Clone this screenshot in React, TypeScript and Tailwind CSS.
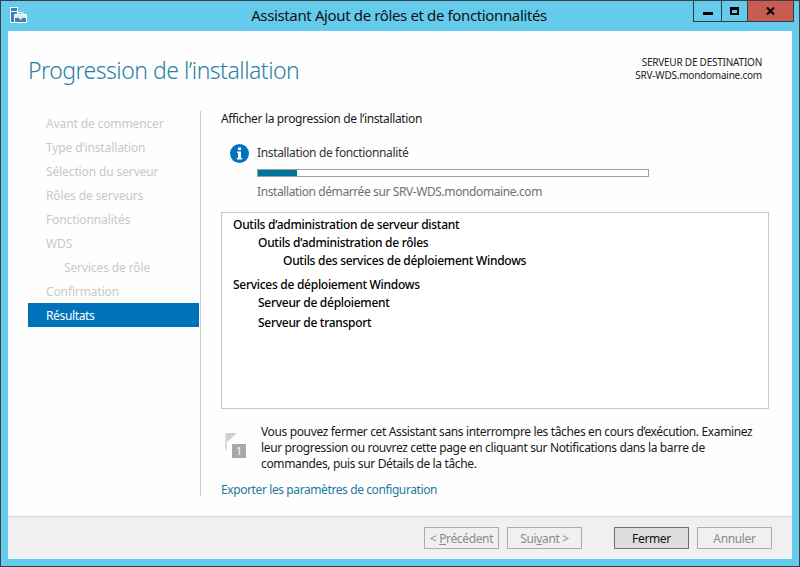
import React from "react";

const steps = [
  { t: "Avant de commencer" },
  { t: "Type d’installation" },
  { t: "Sélection du serveur" },
  { t: "Rôles de serveurs" },
  { t: "Fonctionnalités" },
  { t: "WDS" },
  { t: "Services de rôle", sub: true },
  { t: "Confirmation" },
];

function AppIcon() {
  return (
    <svg width="17" height="16" viewBox="0 0 17 16" className="block">
      <rect x="0.5" y="0.5" width="7" height="15" fill="#2f86b8" stroke="#fff" />
      <rect x="1" y="4" width="6" height="1" fill="#fff" />
      <path d="M7 7.5H16.5V15.5H4.5V7.5H7" fill="#4b7f9a" stroke="#fff" />
      <path d="M8 7V5.5H13V7" fill="none" stroke="#fff" />
      <rect x="5" y="8" width="11" height="3" fill="#dbe9f0" />
      <rect x="9.5" y="10.5" width="2" height="2" fill="#fff" />
    </svg>
  );
}

function InfoIcon() {
  return (
    <svg width="19" height="19" viewBox="0 0 19 19" className="block">
      <circle cx="9.5" cy="9.5" r="9.5" fill="#0072bc" />
      <rect x="8" y="3.5" width="3" height="2.6" fill="#fff" />
      <path d="M7 7.5H11V14H12.2V15.5H6.8V14H8V9H7Z" fill="#fff" />
    </svg>
  );
}

function FlagIcon() {
  return (
    <div className="relative w-[21px] h-[25px]">
      <svg width="21" height="25" viewBox="0 0 21 25" className="block">
        <rect x="0" y="0" width="2" height="17" fill="#dcdcdc" />
        <path d="M2 0H12L2 9Z" fill="#cfcfcf" />
      </svg>
      <div className="absolute right-0 bottom-0 w-[14px] h-[14px] bg-[#a8a8a8] text-white text-[10px] leading-[14px] text-center tracking-normal">1</div>
    </div>
  );
}

function Btn({ label, u, after, primary }: { label?: string; u?: string; after?: string; primary?: boolean }) {
  return (
    <div
      className={
        "w-[75px] h-[22px] border flex items-center justify-center text-[12px] pt-[3px] " +
        (primary ? "border-[#707070] bg-[#dddddd] text-[#111111]" : "border-[#adadad] bg-[#f0f0f0] text-[#8a8a8a]")
      }
    >
      <span>
        {label}
        {u && <span className="underline">{u}</span>}
        {after}
      </span>
    </div>
  );
}

export default function App() {
  return (
    <div className="w-[800px] h-[567px] bg-[#65cbec] border border-[#3a3f45] flex flex-col overflow-hidden text-[12px] font-['Noto_Sans',sans-serif] tracking-[-0.35px] text-[#1a1a1a]">
      <div className="h-[30px] shrink-0 relative">
        <div className="absolute left-[9px] top-[6px]"><AppIcon /></div>
        <div className="text-center text-[15px] leading-[29px] text-[#111111] tracking-[-0.37px] pr-[2px]">Assistant Ajout de rôles et de fonctionnalités</div>
        <div className="absolute right-[5px] top-0 h-[21px] flex border border-t-0 border-[#2f3b45]">
          <div className="w-[28px] border-r border-[#2f3b45] flex items-center justify-center">
            <div className="w-[10px] h-[3px] bg-black mt-[4px]" />
          </div>
          <div className="w-[26px] border-r border-[#2f3b45] flex items-center justify-center">
            <div className="w-[9px] h-[8px] border-2 border-t-[3px] border-black" />
          </div>
          <div className="w-[45px] bg-[#c75c50] flex items-center justify-center">
            <svg width="9" height="8" viewBox="0 0 9 8"><path d="M1 0.5L8 7.5M8 0.5L1 7.5" stroke="#000" strokeWidth="2" /></svg>
          </div>
        </div>
      </div>

      <div className="flex-1 mx-[7px] mb-[7px] bg-[#fefefe] flex flex-col min-h-0">
        <div className="h-[80px] shrink-0 flex justify-between pl-[20px] pr-[30px]">
          <div className="text-[23px] leading-[32px] mt-[23px] text-[#2a7ea8] font-light tracking-[-0.5px]">Progression de l’installation</div>
          <div className="text-right text-[10px] leading-[13px] mt-[25px] text-[#222222] tracking-[-0.23px]">
            <div>SERVEUR DE DESTINATION</div>
            <div>SRV-WDS.mondomaine.com</div>
          </div>
        </div>

        <div className="flex h-[385px] shrink-0 pl-[20px]">
          <div className="w-[172px] shrink-0 pt-[1px] tracking-[-0.12px]">
            {steps.map((s) => (
              <div key={s.t} className={"h-[24px] leading-[24px] text-[#c8c8c8] " + (s.sub ? "pl-[36px]" : "pl-[18px]")}>{s.t}</div>
            ))}
            <div className="h-[24px] w-[171px] mt-[-1px] leading-[26px] pl-[18px] bg-[#0072bc] text-white tracking-[-0.35px]">Résultats</div>
          </div>
          <div className="w-[1px] bg-[#c8c8c8] shrink-0" />
          <div className="w-[548px] ml-[20px]">
            <div className="leading-[16px] text-[#1a1a1a]">Afficher la progression de l’installation</div>
            <div className="flex mt-[17px] ml-[9px]">
              <div className="w-[27px] shrink-0"><InfoIcon /></div>
              <div className="flex-1">
                <div className="leading-[16px] mt-[1px] text-[#333333]">Installation de fonctionnalité</div>
                <div className="w-[392px] h-[8px] mt-[8px] border border-[#a0a0a0] bg-white">
                  <div className="w-[39px] h-full bg-[#007599]" />
                </div>
                <div className="leading-[16px] mt-[7px] text-[#707070] tracking-[-0.4px]">Installation démarrée sur SRV-WDS.mondomaine.com</div>
              </div>
            </div>
            <div className="h-[197px] mt-[12px] border border-[#c8c8c8] bg-white pl-[11px] pt-[3px] text-black font-medium tracking-[-0.28px]">
              <div className="leading-[18px]">Outils d’administration de serveur distant</div>
              <div className="leading-[18px] pl-[25px]">Outils d’administration de rôles</div>
              <div className="leading-[18px] pl-[50px]">Outils des services de déploiement Windows</div>
              <div className="leading-[18px] mt-[6px]">Services de déploiement Windows</div>
              <div className="leading-[18px] pl-[25px]">Serveur de déploiement</div>
              <div className="leading-[18px] pl-[25px] mt-[2px]">Serveur de transport</div>
            </div>
            <div className="flex mt-[15px] pl-[4px] w-[540px]">
              <div className="w-[36px] shrink-0 pt-[9px]"><FlagIcon /></div>
              <div className="leading-[16px] text-[#1a1a1a] tracking-[-0.36px]">
                Vous pouvez fermer cet Assistant sans interrompre les tâches en cours d’exécution. Examinez leur progression ou rouvrez cette page en cliquant sur Notifications dans la barre de commandes, puis sur Détails de la tâche.
              </div>
            </div>
            <div className="mt-[10px] leading-[16px] text-[#1b7a9c] tracking-[-0.4px]">Exporter les paramètres de configuration</div>
          </div>
        </div>

        <div className="flex-1 mt-[20px] bg-[#f0f0f0] border-t border-[#d9d9d9] flex items-center pl-[416px] pb-[1px]">
          <Btn label="< " u="P" after="récédent" />
          <div className="w-[8px]" />
          <Btn label="Sui" u="v" after="ant >" />
          <div className="w-[32px]" />
          <Btn label="Fermer" primary />
          <div className="w-[8px]" />
          <Btn label="Annuler" />
        </div>
      </div>
    </div>
  );
}
